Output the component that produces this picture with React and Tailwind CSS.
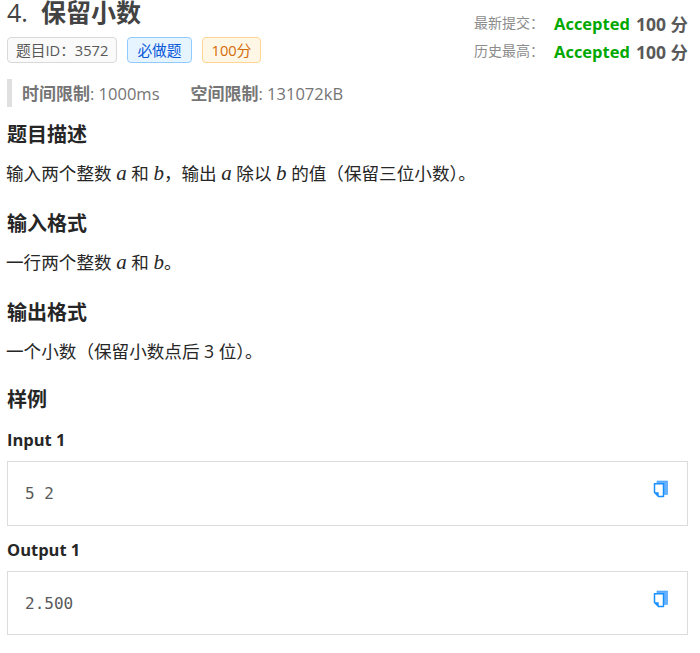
// 复制图标
function CopyIcon() {
  return (
    <svg width="16" height="18" viewBox="0 0 16 18" className="block">
      <path d="M4 1h10.5v13.5h-3V3.5H4z" fill="#69b1ff" stroke="#1890ff" strokeWidth="0.5" />
      <path d="M1.5 3.8h9v12.7H5.5l-4-4z" fill="#fff" stroke="#1890ff" strokeWidth="1.5" strokeLinejoin="round" />
      <path d="M1.5 12.2h4.2v4.3z" fill="#1890ff" />
    </svg>
  );
}

function M({ children }) {
  return <i className="font-['Liberation_Serif',serif] text-[21px] leading-none">{children}</i>;
}

function Section({ title, children }) {
  return (
    <div>
      <h3 className="text-[20px] leading-[26px] font-bold text-[#262626]">{title}</h3>
      <p className="mt-[12px] -ml-px text-[17.6px] leading-[26px] text-[#262626]">{children}</p>
    </div>
  );
}

function Sample({ label, value }) {
  return (
    <div>
      <div className="text-[16.5px] leading-[22px] font-bold text-[#262626]">{label}</div>
      <div className="mt-[10px] h-[64.5px] border border-[#dcdcdc] flex items-start justify-between pl-[17px] pr-[18px]">
        <span className="mt-[21px] font-['DejaVu_Sans_Mono',monospace] text-[16px] leading-[22px] text-[#595959]">{value}</span>
        <span className="mt-[18px]"><CopyIcon /></span>
      </div>
    </div>
  );
}

function Score({ label }) {
  return (
    <div className="flex items-center">
      <span className="w-[80px] -mt-[2px] text-[14px] text-[#8c8c8c]">{label}</span>
      <span className="font-bold text-[#00a800]">Accepted</span>
      <span className="ml-[6px] text-[17.5px] font-bold text-[#595959]">100 分</span>
    </div>
  );
}

export default function App() {
  return (
    <div className="w-[700px] h-[653px] overflow-hidden bg-white pl-[7px] pr-[12px] font-['Open_Sans','Noto_Sans_CJK_SC',sans-serif]">
      <div className="flex justify-between">
        <div>
          <h2 className="text-[25px] leading-[25px] font-bold text-[#434343]">
            <span className="font-medium">4.</span>
            <span className="ml-[13px]">保留小数</span>
          </h2>
          <div className="mt-[12px] flex gap-[10px] text-[14.7px] leading-[24px]">
            <span className="px-[8px] border border-[#d9d9d9] bg-[#fafafa] rounded-[4px] text-[#595959]">题目ID：3572</span>
            <span className="px-[9px] border border-[#91caff] bg-[#e6f4ff] rounded-[4px] text-[#0958d9]">必做题</span>
            <span className="px-[9px] border border-[#ffd591] bg-[#fff7e6] rounded-[4px] text-[#d46b08]">100分</span>
          </div>
        </div>
        <div className="pt-[10px] text-[16.5px] leading-[28px]">
          <Score label="最新提交：" />
          <Score label="历史最高：" />
        </div>
      </div>

      <div className="mt-[13px] border-l-[5px] border-[#e0e0e0] pl-[10px] pt-[1px] h-[28px] flex items-center gap-[31px] text-[16.5px] text-[#757575]">
        <span><b className="text-[17px]">时间限制</b>: 1000ms</span>
        <span><b className="text-[17px]">空间限制</b>: 131072kB</span>
      </div>

      <div className="mt-[15px] flex flex-col gap-[25px]">
        <Section title="题目描述">输入两个整数 <M>a</M> 和 <M>b</M>，输出 <M>a</M> 除以 <M>b</M> 的值（保留三位小数）。</Section>
        <Section title="输入格式">一行两个整数 <M>a</M> 和 <M>b</M>。</Section>
        <Section title="输出格式">一个小数（保留小数点后 3 位）。</Section>
      </div>

      <h3 className="mt-[23px] text-[20px] leading-[26px] font-bold text-[#262626]">样例</h3>
      <div className="mt-[16px] flex flex-col gap-[13px]">
        <Sample label="Input 1" value="5 2" />
        <Sample label="Output 1" value="2.500" />
      </div>
    </div>
  );
}
